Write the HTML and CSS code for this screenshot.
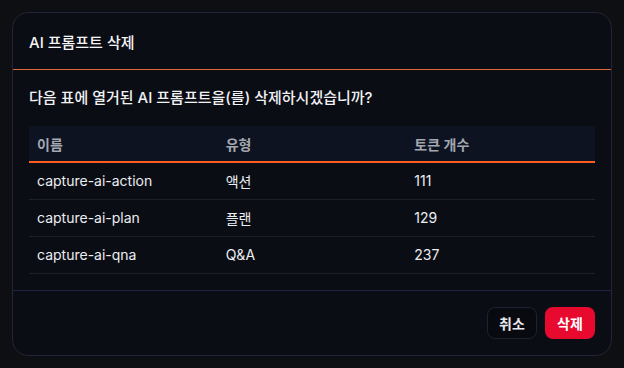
FILE: index.html
```html
<!DOCTYPE html>
<html lang="ko">
<head>
  <meta charset="UTF-8" />
  <title>AI 프롬프트 삭제</title>
  <link rel="stylesheet" href="styles.css">
</head>
<body>
  <!-- Delete confirm dialog -->
  <div class="dialog">
    <div class="dialog-header">
      <h2>AI 프롬프트 삭제</h2>
    </div>
    <div class="dialog-body">
      <p class="question">다음 표에 열거된 AI 프롬프트을(를) 삭제하시겠습니까?</p>
      <table class="prompt-table">
        <thead>
          <tr><th>이름</th><th>유형</th><th>토큰 개수</th></tr>
        </thead>
        <tbody>
          <tr><td>capture-ai-action</td><td>액션</td><td>111</td></tr>
          <tr><td>capture-ai-plan</td><td>플랜</td><td>129</td></tr>
          <tr><td>capture-ai-qna</td><td>Q&amp;A</td><td>237</td></tr>
        </tbody>
      </table>
    </div>
    <div class="dialog-footer">
      <button class="btn btn-cancel">취소</button>
      <button class="btn btn-delete">삭제</button>
    </div>
  </div>
</body>
</html>
```

FILE: styles.css
```css
/* Basic Resets */
* { margin: 0; padding: 0; box-sizing: border-box; }
body {
  background-color: #0e0f12;
  color: #f1f2f4;
  font-family: "Inter", "Noto Sans CJK KR", sans-serif;
  padding: 12px;
}

/* === Dialog === */
.dialog {
  width: 600px;
  background: #0b0d14;
  border: 1px solid #22253a;
  border-radius: 16px;
  overflow: hidden;
}
.dialog-header {
  height: 57px;
  padding: 0 16px;
  display: flex;
  align-items: center;
  border-bottom: 1px solid #e0643a;
}
.dialog-header h2 {
  font-size: 15px;
  font-weight: 500;
  color: #f3f4f6;
}
.dialog-body {
  padding: 18px 16px 16px;
  border-bottom: 1px solid #1f2342;
}
.question {
  font-size: 15px;
  font-weight: 500;
  line-height: 20px;
  margin-bottom: 18px;
}

/* Table */
.prompt-table {
  width: 100%;
  border-collapse: collapse;
  table-layout: fixed;
  font-size: 14px;
}
.prompt-table th {
  background: #0e1322;
  color: #a3a7b0;
  font-weight: 600;
  text-align: left;
  height: 36px;
  padding: 0 8px;
  border-bottom: 2px solid #ff5a1f;
}
.prompt-table td {
  height: 37px;
  padding: 0 8px;
  color: #eceef1;
  border-bottom: 1px solid #1d1f2b;
}

/* Footer buttons */
.dialog-footer {
  display: flex;
  justify-content: flex-end;
  gap: 8px;
  padding: 16px;
}
.btn {
  height: 32px;
  width: 50px;
  border-radius: 8px;
  font-family: inherit;
  font-size: 14px;
  font-weight: 600;
  cursor: pointer;
}
.btn-cancel {
  background: #080a10;
  border: 1px solid #1e2131;
  color: #e6e7ea;
}
.btn-delete {
  background: #e8092f;
  border: none;
  color: #fff;
}
```
